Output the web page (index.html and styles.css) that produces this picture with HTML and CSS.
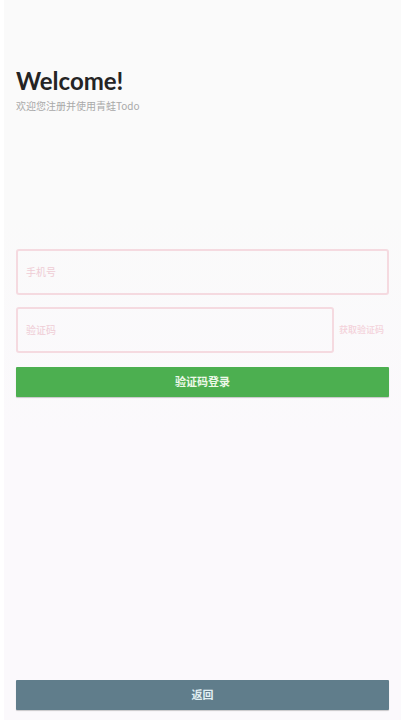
FILE: index.html
```html
<!DOCTYPE html>
<html lang="zh-CN">
<head>
  <meta charset="UTF-8" />
  <meta name="viewport" content="width=device-width, initial-scale=1.0" />
  <title>青蛙Todo</title>
  <link rel="stylesheet" href="styles.css">
</head>
<body>
  <main class="page">
    <header class="intro">
      <h1 class="title">Welcome!</h1>
      <p class="subtitle">欢迎您注册并使用青蛙Todo</p>
    </header>

    <form class="login-form">
      <input class="field" type="tel" placeholder="手机号" aria-label="手机号" />
      <div class="code-row">
        <input class="field" type="text" placeholder="验证码" aria-label="验证码" />
        <button class="get-code" type="button">获取验证码</button>
      </div>
      <button class="btn btn-login" type="submit">验证码登录</button>
    </form>

    <button class="btn btn-back" type="button">返回</button>
  </main>
</body>
</html>
```

FILE: styles.css
```css
* {
  box-sizing: border-box;
}

body {
  margin: 0;
  background: #fff;
  font-family: "Noto Sans CJK SC", sans-serif;
}

.page {
  display: flex;
  flex-direction: column;
  min-height: 100vh;
  margin: 0 4px;
  padding: 64px 12px 10px;
  background: linear-gradient(#fafafa 30%, #fbf9fc 60%);
}

.title {
  margin: 0;
  color: #242424;
  font-family: Lato, sans-serif;
  font-size: 24px;
  font-weight: 700;
  line-height: 34px;
}

.subtitle {
  margin: 0;
  color: #a9a9a9;
  font-size: 10px;
  line-height: 16px;
}

.login-form {
  display: flex;
  flex-direction: column;
  margin-top: 135px;
}

.field {
  width: 100%;
  height: 46px;
  padding: 0 8px 2px;
  border: 2px solid #f5dae0;
  border-radius: 3px;
  background: transparent;
  color: #242424;
  font-family: inherit;
  font-size: 10px;
  outline: none;
}

.field::placeholder {
  color: #efccd5;
  opacity: 1;
}

.code-row {
  display: flex;
  align-items: center;
  margin-top: 12px;
}

.code-row .field {
  flex: 1;
  min-width: 0;
}

.get-code {
  padding: 0 5px 2px;
  border: none;
  background: none;
  color: #f4d2da;
  font-family: inherit;
  font-size: 9px;
  font-weight: 500;
  cursor: pointer;
}

.btn {
  height: 30px;
  padding: 0 0 2px;
  border: none;
  border-radius: 1px;
  color: #fff;
  font-family: inherit;
  font-size: 11px;
  font-weight: 700;
  line-height: 16px;
  box-shadow: 0 1px 1px rgba(0, 0, 0, 0.2);
  cursor: pointer;
}

.btn-login {
  margin-top: 14px;
  background: #4caf50;
  color: #edf8e8;
}

.btn-back {
  margin-top: auto;
  background: #607d8b;
  color: #e0eff3;
}
```
